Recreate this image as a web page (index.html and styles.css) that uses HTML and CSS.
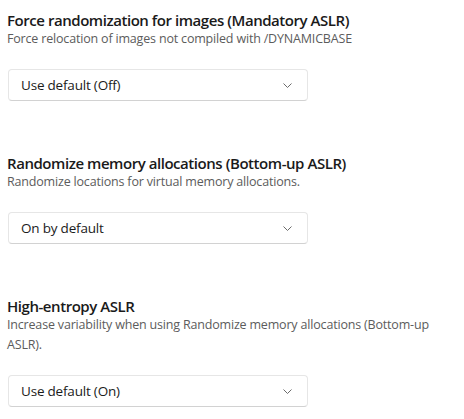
FILE: index.html
```html
<!DOCTYPE html>
<html lang="en">
<head>
<meta charset="utf-8">
<title>Exploit protection</title>
<link rel="stylesheet" href="styles.css">
</head>
<body>
<main class="page">
  <section class="setting">
    <h2 class="title">Force randomization for images (Mandatory ASLR)</h2>
    <p class="desc">Force relocation of images not compiled with /DYNAMICBASE</p>
    <div class="select">
      <span class="value">Use default (Off)</span>
      <svg class="chev" width="9" height="5" viewBox="0 0 9 5"><path d="M0.5 0.5 L4.5 4.5 L8.5 0.5" fill="none" stroke="#6b6b6b" stroke-width="1"/></svg>
    </div>
  </section>
  <section class="setting">
    <h2 class="title">Randomize memory allocations (Bottom-up ASLR)</h2>
    <p class="desc">Randomize locations for virtual memory allocations.</p>
    <div class="select">
      <span class="value">On by default</span>
      <svg class="chev" width="9" height="5" viewBox="0 0 9 5"><path d="M0.5 0.5 L4.5 4.5 L8.5 0.5" fill="none" stroke="#6b6b6b" stroke-width="1"/></svg>
    </div>
  </section>
  <section class="setting">
    <h2 class="title">High-entropy ASLR</h2>
    <p class="desc">Increase variability when using Randomize memory allocations (Bottom-up ASLR).</p>
    <div class="select">
      <span class="value">Use default (On)</span>
      <svg class="chev" width="9" height="5" viewBox="0 0 9 5"><path d="M0.5 0.5 L4.5 4.5 L8.5 0.5" fill="none" stroke="#6b6b6b" stroke-width="1"/></svg>
    </div>
  </section>
</main>
</body>
</html>
```
FILE: styles.css
```css
html, body {
  margin: 0;
  padding: 0;
  background: #ffffff;
}
body {
  font-family: "Open Sans", "Noto Sans", "Liberation Sans", sans-serif;
  color: #1b1b1b;
}
.page {
  padding: 12px 0 0 7px;
  display: flex;
  flex-direction: column;
  gap: 54px;
}
.setting {
  display: flex;
  flex-direction: column;
  width: 455px;
}
.title {
  margin: 0;
  font-size: 15px;
  font-weight: 600;
  line-height: 17px;
  letter-spacing: -0.45px;
  color: #1a1a1a;
}
.desc {
  margin: 0;
  font-size: 12.5px;
  line-height: 20px;
  letter-spacing: -0.18px;
  color: #5c5c5c;
}
.select {
  margin-top: 20px;
  margin-left: 1px;
  box-sizing: border-box;
  width: 300px;
  height: 32px;
  display: flex;
  align-items: center;
  justify-content: space-between;
  padding: 0 15px 0 12px;
  background: #ffffff;
  border: 1px solid #e6e6e6;
  border-bottom-color: #d2d2d2;
  border-radius: 4px;
}
.value {
  font-size: 13.5px;
  letter-spacing: -0.2px;
  color: #1b1b1b;
}
.chev {
  display: block;
}
```
